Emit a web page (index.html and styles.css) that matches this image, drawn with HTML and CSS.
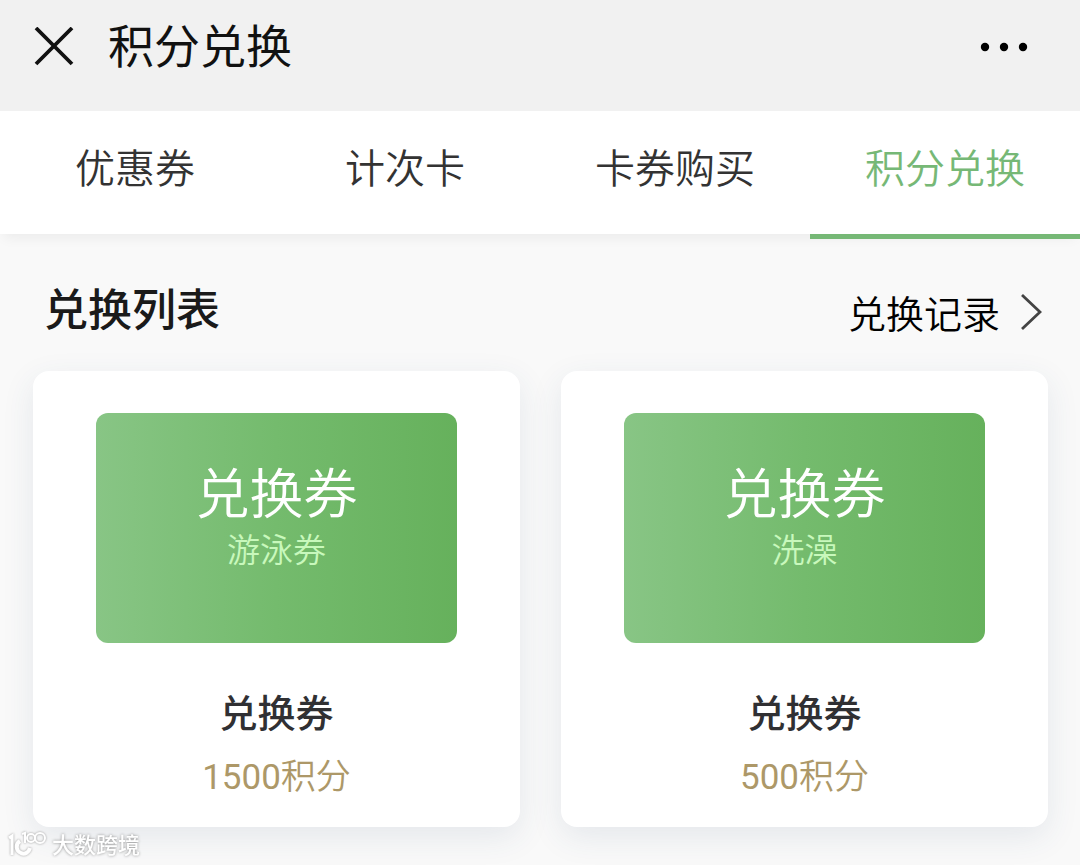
FILE: index.html
```html
<!DOCTYPE html>
<html lang="zh-CN">
<head>
    <meta charset="UTF-8">
    <meta name="viewport" content="width=device-width, initial-scale=1.0">
    <title>积分兑换</title>
    <link rel="stylesheet" href="styles.css">
</head>
<body>

    <!-- Top bar -->
    <header class="topbar">
        <button class="icon-btn" type="button" aria-label="关闭">
            <svg width="40" height="40" viewBox="0 0 40 40" fill="none" stroke="#111" stroke-width="3.8">
                <path d="M2 1L38 37M38 1L2 37"/>
            </svg>
        </button>
        <h1 class="topbar-title">积分兑换</h1>
        <button class="icon-btn" type="button" aria-label="更多">
            <svg width="48" height="10" viewBox="0 0 48 10" fill="#000">
                <circle cx="5" cy="5" r="4.2"/>
                <circle cx="24" cy="5" r="4.2"/>
                <circle cx="43" cy="5" r="4.2"/>
            </svg>
        </button>
    </header>

    <!-- Tabs -->
    <nav class="tabs">
        <a class="tab" href="#coupon">优惠券</a>
        <a class="tab" href="#times">计次卡</a>
        <a class="tab" href="#buy">卡券购买</a>
        <a class="tab active" href="#points" aria-current="page">积分兑换</a>
    </nav>

    <!-- Exchange list -->
    <main class="content">
        <div class="list-head">
            <h2 class="list-title">兑换列表</h2>
            <a class="record-link" href="#record">兑换记录
                <svg width="22" height="42" viewBox="0 0 22 42" fill="none" stroke="#444" stroke-width="2.8">
                    <path d="M2 1L20 18L2 35"/>
                </svg>
            </a>
        </div>

        <div class="cards">
            <a class="card" href="#swim">
                <div class="ticket">
                    <span class="ticket-name">兑换券</span>
                    <span class="ticket-type">游泳券</span>
                </div>
                <h3 class="card-name">兑换券</h3>
                <p class="card-points">1500积分</p>
            </a>
            <a class="card" href="#bath">
                <div class="ticket">
                    <span class="ticket-name">兑换券</span>
                    <span class="ticket-type">洗澡</span>
                </div>
                <h3 class="card-name">兑换券</h3>
                <p class="card-points">500积分</p>
            </a>
        </div>
    </main>

    <!-- Watermark -->
    <div class="watermark">
        <svg width="40" height="30" viewBox="0 0 40 30" fill="none" stroke="#fff">
            <path stroke-width="3" d="M1 7L4 5V24"/>
            <path stroke-width="4" d="M12 10C7 13 8 20 13 22C17 24 21 21 22 17"/>
            <path stroke-width="2" d="M14 3L17 2V12"/>
            <circle stroke-width="2" cx="23" cy="7" r="4"/>
            <circle stroke-width="2" cx="32" cy="7" r="5"/>
        </svg>
        <span>大数跨境</span>
    </div>

</body>
</html>
```

FILE: styles.css
```css
/* Global */
* {
    box-sizing: border-box;
}
body {
    margin: 0;
    background: #f9f9f9;
    color: #1a1a1a;
    font-family: Roboto, "Noto Sans CJK SC", sans-serif;
}
h1, h2, h3, p {
    margin: 0;
}
a {
    color: inherit;
    text-decoration: none;
}
svg {
    display: block;
}
/* Top bar */
.topbar {
    display: flex;
    align-items: center;
    padding: 15px 52px 32px 34px;
    background: #f1f1f1;
}
.icon-btn {
    padding: 0;
    border: 0;
    background: none;
    cursor: pointer;
}
.topbar-title {
    flex: 1;
    margin-left: 34px;
    color: #111;
    font-size: 46px;
    font-weight: 400;
    line-height: 64px;
}
/* Tabs */
.tabs {
    position: relative;
    display: grid;
    grid-template-columns: repeat(4, 1fr);
    background: #fff;
    box-shadow: 0 8px 12px -4px rgba(0, 0, 0, 0.06);
}
.tab {
    position: relative;
    padding: 35px 0 40px;
    color: #333;
    font-size: 40px;
    font-weight: 350;
    line-height: 48px;
    text-align: center;
}
.tab.active {
    color: #76b876;
}
.tab.active::after {
    content: "";
    position: absolute;
    right: 0;
    bottom: -5px;
    left: 0;
    height: 5px;
    background: #76b876;
}
/* Exchange list */
.content {
    padding: 45px 32px 38px 33px;
}
.list-head {
    display: flex;
    align-items: flex-end;
    justify-content: space-between;
    padding: 0 6px 28px 11px;
}
.list-title {
    font-size: 44px;
    font-weight: 500;
    line-height: 64px;
}
.record-link {
    display: flex;
    align-items: center;
    gap: 20px;
    color: #000;
    font-size: 38px;
    font-weight: 350;
    line-height: 56px;
}
.cards {
    display: grid;
    grid-template-columns: 1fr 1fr;
    gap: 41px;
}
.card {
    padding: 42px 0 24px;
    border-radius: 16px;
    background: #fff;
    box-shadow: 0 10px 32px rgba(50, 80, 120, 0.1);
    text-align: center;
}
.ticket {
    display: flex;
    flex-direction: column;
    align-items: center;
    width: 74%;
    aspect-ratio: 36 / 23;
    margin: 0 auto 44px;
    padding-top: 50px;
    border-radius: 12px;
    background: linear-gradient(90deg, #88c585, #74bb6d 50%, #66b15c);
}
.ticket-name {
    color: #fff;
    font-size: 54px;
    font-weight: 350;
    line-height: 66px;
}
.ticket-type {
    color: #c8f8bc;
    font-size: 33px;
    font-weight: 350;
    line-height: 44px;
}
.card-name {
    color: #303033;
    font-size: 38px;
    font-weight: 500;
    line-height: 54px;
}
.card-points {
    margin-top: 12px;
    color: #ad9868;
    font-family: "Roboto", "Noto Sans CJK SC DemiLight", "Noto Sans CJK SC", sans-serif;
    font-size: 35px;
    font-weight: 400;
    line-height: 50px;
}
/* Watermark */
.watermark {
    position: fixed;
    bottom: 4px;
    left: 8px;
    display: flex;
    align-items: center;
    gap: 4px;
    color: #fff;
    font-size: 22px;
    font-weight: 500;
    line-height: 30px;
    text-shadow: 0 0 3px #888;
}
.watermark svg {
    filter: drop-shadow(0 0 1px #999);
}
```
